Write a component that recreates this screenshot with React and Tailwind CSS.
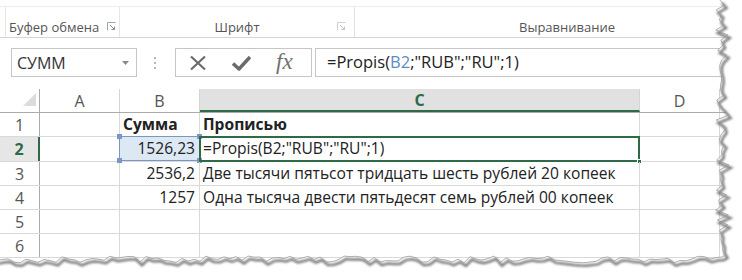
const font = { fontFamily: '"Open Sans", "Noto Sans", sans-serif' }

const rows = [
  { n: 1, b: 'Сумма', c: 'Прописью', bold: true },
  { n: 2, b: '1526,23', c: '=Propis(B2;"RUB";"RU";1)', active: true },
  { n: 3, b: '2536,2', c: 'Две тысячи пятьсот тридцать шесть рублей 20 копеек' },
  { n: 4, b: '1257', c: 'Одна тысяча двести пятьдесят семь рублей 00 копеек' },
  { n: 5 },
  { n: 6 },
]

// torn paper edge, deterministic jitter
let seed = 7
const rnd = () => {
  seed = (seed * 9301 + 49297) % 233280
  return seed / 233280
}
const right = []
for (let y = 0; y < 256; y += 5) {
  right.push([719 + rnd() * 10 - (y % 10 === 0 ? 4 : 0), y])
}
const bottom = []
for (let x = 722; x > -6; x -= 6) {
  bottom.push([x, 256 + rnd() * 7 - (x % 12 === 0 ? 3 : 0)])
}
const edge = [...right, ...bottom]
const edgeLine = 'M' + edge.map(([x, y]) => `${x.toFixed(1)},${y.toFixed(1)}`).join(' L')
const outside = `M742,0 L${edgeLine.slice(1)} L-6,280 L742,280 Z`

function Launcher({ className = '' }) {
  return (
    <svg className={className} width="9" height="9" viewBox="0 0 9 9">
      <path d="M0.5 8.5V0.5H8.5" fill="none" stroke="#a6a6a6" />
      <path d="M3 3L7.5 7.5M4.5 7.5H7.5V4.5" fill="none" stroke="#8a8a8a" />
    </svg>
  )
}

function Ribbon() {
  return (
    <div className="flex h-[38px] border-b border-[#d5d5d5] pt-[6px]">
      <div className="flex flex-1 border-t border-[#ececec] pl-[5px]">
        <div className="flex w-[115px] items-end whitespace-nowrap border-r border-l border-[#e6e6e6] pl-[3px]">
          <span className="text-[13px] leading-[19px] text-[#555]">Буфер обмена</span>
          <Launcher className="mb-[6px] ml-[8px]" />
        </div>
        <div className="relative flex w-[235px] items-end justify-center border-r border-[#e1e1e1]">
          <span className="text-[13px] leading-[19px] text-[#555]">Шрифт</span>
          <Launcher className="absolute bottom-[6px] right-[8px] opacity-50" />
        </div>
        <div className="flex w-[424px] shrink-0 items-end justify-center">
          <span className="text-[13px] leading-[19px] text-[#555]">Выравнивание</span>
        </div>
      </div>
    </div>
  )
}

function FormulaBar() {
  return (
    <div className="flex h-[49px] items-start pt-[10px]">
      <div className="ml-[11px] flex h-[29px] w-[126px] items-center justify-between border border-[#c6c6c6] pl-[5px] pr-[7px]">
        <span className="text-[16px] text-[#333]">СУММ</span>
        <svg width="7" height="4" viewBox="0 0 7 4">
          <path d="M0 0H7L3.5 4Z" fill="#8a8a8a" />
        </svg>
      </div>
      <div className="ml-[16px] mt-[9px] flex w-[4px] flex-col items-center gap-[3px]">
        <span className="h-[2px] w-[2px] bg-[#b5b5b5]" />
        <span className="h-[2px] w-[2px] bg-[#b5b5b5]" />
        <span className="h-[2px] w-[2px] bg-[#b5b5b5]" />
      </div>
      <div className="ml-[18px] flex h-[29px] w-[137px] items-center border border-[#c6c6c6]">
        <svg className="ml-[13px]" width="18" height="16" viewBox="0 0 18 16">
          <path d="M2 1.5L16 14.5M16 1.5L2 14.5" stroke="#6b6b6b" strokeWidth="2.2" />
        </svg>
        <svg className="ml-[25px]" width="19" height="16" viewBox="0 0 19 16">
          <path d="M1 8.5L7 14L18 2" fill="none" stroke="#6b6b6b" strokeWidth="3.4" strokeLinejoin="round" />
        </svg>
        <span
          className="ml-[25px] mb-[2px] text-[23px] italic leading-none text-[#6f6f6f]"
          style={{ fontFamily: '"Liberation Serif", serif' }}
        >
          fx
        </span>
      </div>
      <div className="ml-[3px] flex h-[29px] flex-1 items-center border border-[#c6c6c6] pl-[11px]">
        <span className="text-[16.5px] text-[#222]">
          =Propis(<span className="text-[#5b8ac9]">B2</span>;"RUB";"RU";1)
        </span>
      </div>
    </div>
  )
}

function HeaderRow() {
  return (
    <div className="mt-[2px] flex h-[24px] border-b border-[#ababab] text-[16px] text-[#555]">
      <div className="relative w-[40px] border-r border-[#ababab]">
        <svg className="absolute bottom-[6px] right-[3px]" width="13" height="13" viewBox="0 0 13 13">
          <path d="M13 0V13H0Z" fill="#dcdcdc" />
        </svg>
      </div>
      <div className="flex w-[80px] items-center justify-center border-r border-[#d4d4d4]">A</div>
      <div className="flex w-[80px] items-center justify-center border-r border-[#d4d4d4]">B</div>
      <div className="flex w-[440px] items-center justify-center border-b-2 border-r border-[#d4d4d4] border-b-[#2d6a45] bg-[#e1e1e1] font-bold text-[#2d6a45]">
        C
      </div>
      <div className="flex w-[80px] items-center justify-center border-r border-[#d4d4d4]">D</div>
    </div>
  )
}

function Row({ n, b, c, bold, active }) {
  return (
    <div className={`flex border-b border-[#d9d9d9] text-[15.6px] text-[#222] ${active ? 'h-[25px]' : 'h-[24px]'}`}>
      <div
        className={`flex w-[40px] items-center justify-center text-[16px] ${
          active ? 'border-r-2 border-[#2d6a45] bg-[#e6e6e6] font-bold text-[#2d6a45]' : 'border-r border-[#ababab] text-[#555]'
        }`}
      >
        {n}
      </div>
      <div className="w-[80px] border-r border-[#d9d9d9]" />
      <div
        className={`relative flex w-[80px] items-center border-r border-[#d9d9d9] ${
          bold ? 'justify-start pl-[3px] font-bold' : 'justify-end pr-[4px]'
        } ${active ? 'bg-[#dde8f5]' : ''}`}
      >
        {b}
        {active && (
          <div className="absolute -left-px -top-px h-[25px] w-[81px] border border-[#7a97c4]">
            <span className="absolute -left-[3px] -top-[3px] h-[5px] w-[5px] bg-[#7a97c4]" />
            <span className="absolute -right-[3px] -top-[3px] h-[5px] w-[5px] bg-[#7a97c4]" />
            <span className="absolute -bottom-[3px] -left-[3px] h-[5px] w-[5px] bg-[#7a97c4]" />
            <span className="absolute -bottom-[3px] -right-[3px] h-[5px] w-[5px] bg-[#7a97c4]" />
          </div>
        )}
      </div>
      <div className={`relative flex w-[440px] items-center border-r border-[#d9d9d9] pl-[3px] ${bold ? 'font-bold' : ''}`}>
        {c}
        {active && (
          <div className="absolute -left-px -top-px h-[26px] w-[441px] border-2 border-[#2d6a45]">
            <span className="absolute -bottom-[4px] -right-[4px] h-[5px] w-[5px] border border-white bg-[#2d6a45]" />
          </div>
        )}
      </div>
      <div className="w-[80px] border-r border-[#d9d9d9]" />
    </div>
  )
}

export default function App() {
  return (
    <div className="relative h-[280px] w-[742px] overflow-hidden bg-white" style={font}>
      <Ribbon />
      <FormulaBar />
      <HeaderRow />
      {rows.map((r) => (
        <Row key={r.n} {...r} />
      ))}
      <svg className="pointer-events-none absolute inset-0" width="742" height="280">
        <defs>
          <filter id="blur" x="-5%" y="-5%" width="110%" height="110%">
            <feGaussianBlur stdDeviation="1.2" />
          </filter>
        </defs>
        <path d={outside} fill="#ffffff" />
        <path d={edgeLine} fill="none" stroke="#7a7a7a" strokeWidth="2.5" transform="translate(2,3)" filter="url(#blur)" />
        <path d={edgeLine} fill="none" stroke="#9a9a9a" strokeWidth="0.8" />
      </svg>
    </div>
  )
}
